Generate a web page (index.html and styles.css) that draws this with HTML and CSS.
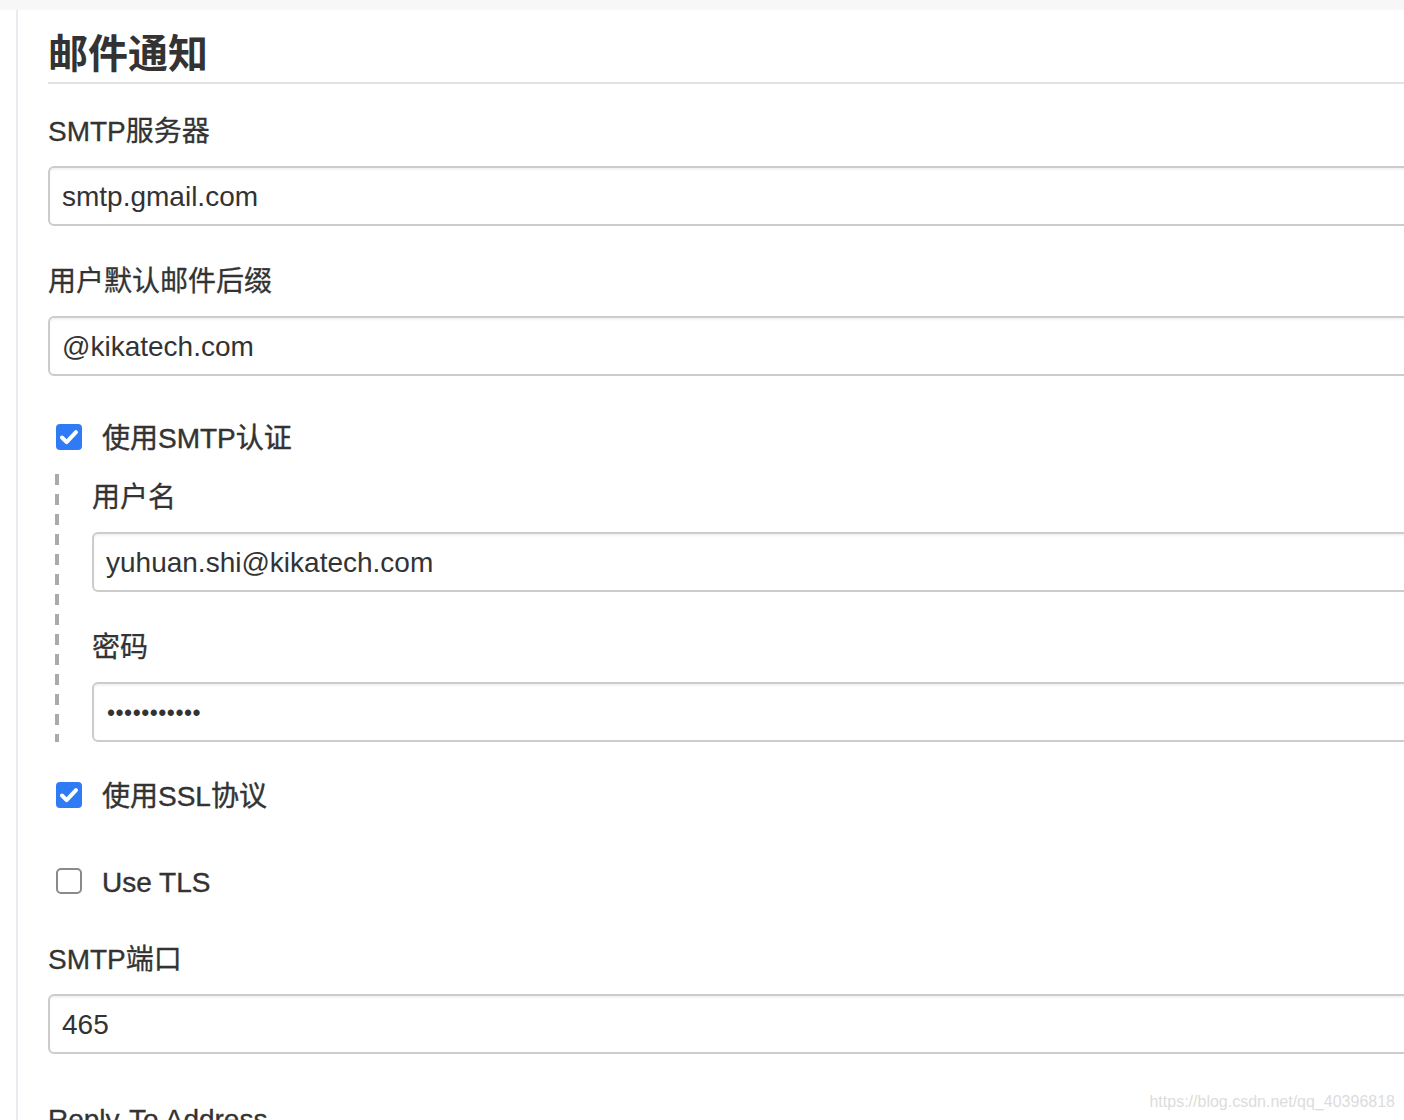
FILE: index.html
```html
<!DOCTYPE html>
<html lang="zh-CN">
<head>
    <meta charset="UTF-8">
    <title>邮件通知</title>
    <link rel="stylesheet" href="styles.css">
</head>
<body>
    <div class="top-bar"></div>
    <div class="main">
        <h1 class="section-title">邮件通知</h1>

        <div class="field">
            <label class="field-label">SMTP服务器</label>
            <input class="text-input" type="text" value="smtp.gmail.com">
        </div>

        <div class="field">
            <label class="field-label">用户默认邮件后缀</label>
            <input class="text-input" type="text" value="@kikatech.com">
        </div>

        <div class="check-row">
            <span class="check-box checked">
                <svg width="26" height="26" viewBox="0 0 26 26"><path d="M6 13.5l4.6 4.6 9.4-10" fill="none" stroke="#fff" stroke-width="4" stroke-linecap="round" stroke-linejoin="round"/></svg>
            </span>
            <span class="check-label">使用SMTP认证</span>
        </div>

        <!-- 认证的子项 -->
        <div class="sub-fields">
            <div class="field">
                <label class="field-label">用户名</label>
                <input class="text-input" type="text" value="yuhuan.shi@kikatech.com">
            </div>
            <div class="field last">
                <label class="field-label">密码</label>
                <input class="text-input password" type="password" value="12345678901">
            </div>
        </div>

        <div class="check-row">
            <span class="check-box checked">
                <svg width="26" height="26" viewBox="0 0 26 26"><path d="M6 13.5l4.6 4.6 9.4-10" fill="none" stroke="#fff" stroke-width="4" stroke-linecap="round" stroke-linejoin="round"/></svg>
            </span>
            <span class="check-label">使用SSL协议</span>
        </div>

        <div class="check-row tls">
            <span class="check-box"></span>
            <span class="check-label">Use TLS</span>
        </div>

        <div class="field port">
            <label class="field-label">SMTP端口</label>
            <input class="text-input" type="text" value="465">
        </div>

        <div class="field">
            <label class="field-label">Reply-To Address</label>
            <input class="text-input" type="text" value="">
        </div>
    </div>

    <div class="watermark">https://blog.csdn.net/qq_40396818</div>
</body>
</html>
```

FILE: styles.css
```css
html, body {
    margin: 0;
    height: 100%;
    overflow: hidden;
}

body {
    font-family: "Liberation Sans", Arial, "Noto Sans CJK SC", sans-serif;
    color: #333;
    background: #fff;
    position: relative;
}

.top-bar {
    height: 10px;
    background: #f7f7f7;
}

.main {
    margin-left: 16px;
    margin-right: -60px;
    border-left: 2px solid #e8ecf0;
    padding-left: 30px;
    padding-top: 20px;
    min-height: 1200px;
}

.section-title {
    margin: 0 0 28px;
    font-size: 40px;
    line-height: 48px;
    font-weight: bold;
    padding-bottom: 4px;
    border-bottom: 2px solid #e2e2e2;
}

.field {
    margin-bottom: 36px;
}

.field.last {
    margin-bottom: 0;
}

.field.port {
    margin-bottom: 46px;
}

.field-label {
    display: block;
    font-size: 28px;
    line-height: 36px;
    padding-top: 2px;
    margin-bottom: 16px;
    -webkit-text-stroke: 0.3px #333;
}

.text-input {
    display: block;
    box-sizing: border-box;
    width: 100%;
    height: 60px;
    margin: 0;
    padding: 2px 12px 0;
    border: 2px solid #ccc;
    border-radius: 6px;
    box-shadow: inset 0 2px 2px rgba(0, 0, 0, 0.05);
    font-family: "Liberation Sans", Arial, sans-serif;
    font-size: 28px;
    color: #333;
    background: #fff;
    outline: none;
}

.text-input.password {
    padding-left: 13px;
    font-size: 23px;
    letter-spacing: 0.5px;
}

/* 复选框行 */
.check-row {
    display: flex;
    align-items: center;
    height: 50px;
    margin-bottom: 36px;
    padding-left: 8px;
}

.check-row.tls {
    margin-bottom: 34px;
}

.check-box {
    box-sizing: border-box;
    width: 26px;
    height: 26px;
    border: 2px solid #8a8a8a;
    border-radius: 5px;
    background: #fff;
    flex-shrink: 0;
}

.check-box.checked {
    border: none;
    background: #2f7bf5;
    border-radius: 4px;
}

.check-box svg {
    display: block;
}

.check-label {
    margin-left: 20px;
    padding-top: 3px;
    font-size: 28px;
    line-height: 36px;
    -webkit-text-stroke: 0.4px #333;
}

.sub-fields {
    margin: -24px 0 28px 7px;
    padding: 4px 0 0 37px;
    background: repeating-linear-gradient(to bottom, #aaa 0, #aaa 11px, transparent 11px, transparent 20px) left top / 4px 100% no-repeat;
}

.watermark {
    position: absolute;
    right: 9px;
    bottom: 9px;
    font-size: 16px;
    color: #dcdcdc;
    font-family: "Liberation Sans", Arial, sans-serif;
}
```
